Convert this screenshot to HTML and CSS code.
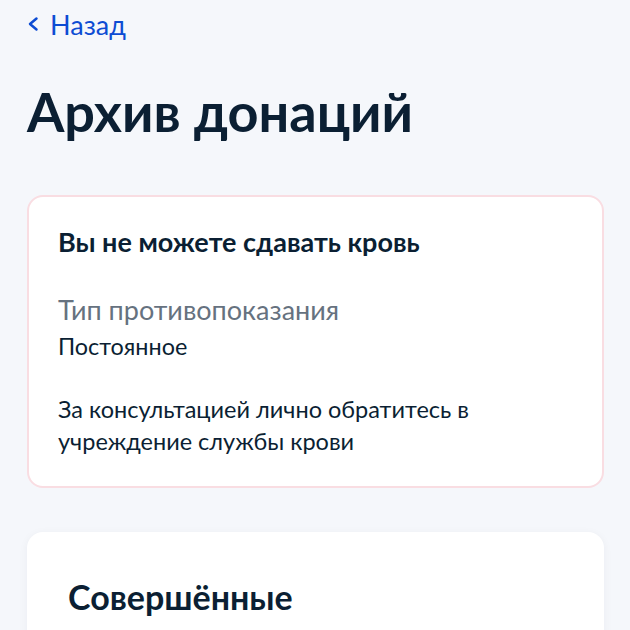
FILE: index.html
```html
<!DOCTYPE html>
<html lang="ru">
<head>
    <meta charset="UTF-8">
    <meta name="viewport" content="width=device-width, initial-scale=1.0">
    <title>Архив донаций</title>
    <link rel="stylesheet" href="styles.css">
</head>
<body>

    <!-- Back link -->
    <a class="back-link" href="#">
        <svg class="back-icon" width="12" height="16" viewBox="0 0 12 16">
            <path d="M9.5 2.5 L3 8 L9.5 13.5" fill="none" stroke="#0d4cd3" stroke-width="2.5" stroke-linecap="round" stroke-linejoin="round"/>
        </svg>
        Назад
    </a>

    <h1 class="page-title">Архив донаций</h1>

    <!-- Contraindication notice -->
    <div class="card card-warning">
        <h2 class="card-title">Вы не можете сдавать кровь</h2>
        <div class="field">
            <div class="field-label">Тип противопоказания</div>
            <div class="field-value">Постоянное</div>
        </div>
        <p class="card-note">За консультацией лично обратитесь в учреждение службы крови</p>
    </div>

    <!-- Completed donations -->
    <div class="card card-list">
        <h2 class="section-title">Совершённые</h2>
    </div>

</body>
</html>
```

FILE: styles.css
```css
/* Page base */
body {
    margin: 0;
    padding: 0 26px 40px 27px;
    background-color: #f5f7fb;
    font-family: Lato, "Noto Sans", sans-serif;
    color: #0b1f33;
}

/* Back link at the top */
.back-link {
    display: flex;
    align-items: center;
    gap: 11px;
    height: 48px;
    color: #0d4cd3;
    font-size: 27px;
    text-decoration: none;
}

.back-icon {
    margin-top: -1px;
}

/* Main heading */
.page-title {
    margin: 32px 0 51px;
    font-size: 54px;
    font-weight: 700;
    line-height: 64px;
}

/* Cards */
.card {
    background-color: #fff;
    border-radius: 16px;
    box-sizing: border-box;
}

.card-warning {
    border: 2px solid #f9dde2;
    padding: 29px 30px 29px 29px;
}

.card-list {
    margin-top: 44px;
    padding: 45px 40px 30px 41px;
    box-shadow: 0 2px 10px rgba(11, 31, 51, 0.05);
}

.card-title {
    margin: 0 0 36px;
    font-size: 27px;
    font-weight: 700;
    line-height: 32px;
}

.field-label {
    color: #66727f;
    font-size: 27px;
    line-height: 32px;
}

.field-value {
    font-size: 23.4px;
    line-height: 32px;
    margin-top: 4px;
}

.card-note {
    margin: 31px 0 0;
    font-size: 23.5px;
    line-height: 32px;
}

.section-title {
    margin: 0;
    font-size: 34px;
    font-weight: 700;
    line-height: 40px;
}
```
